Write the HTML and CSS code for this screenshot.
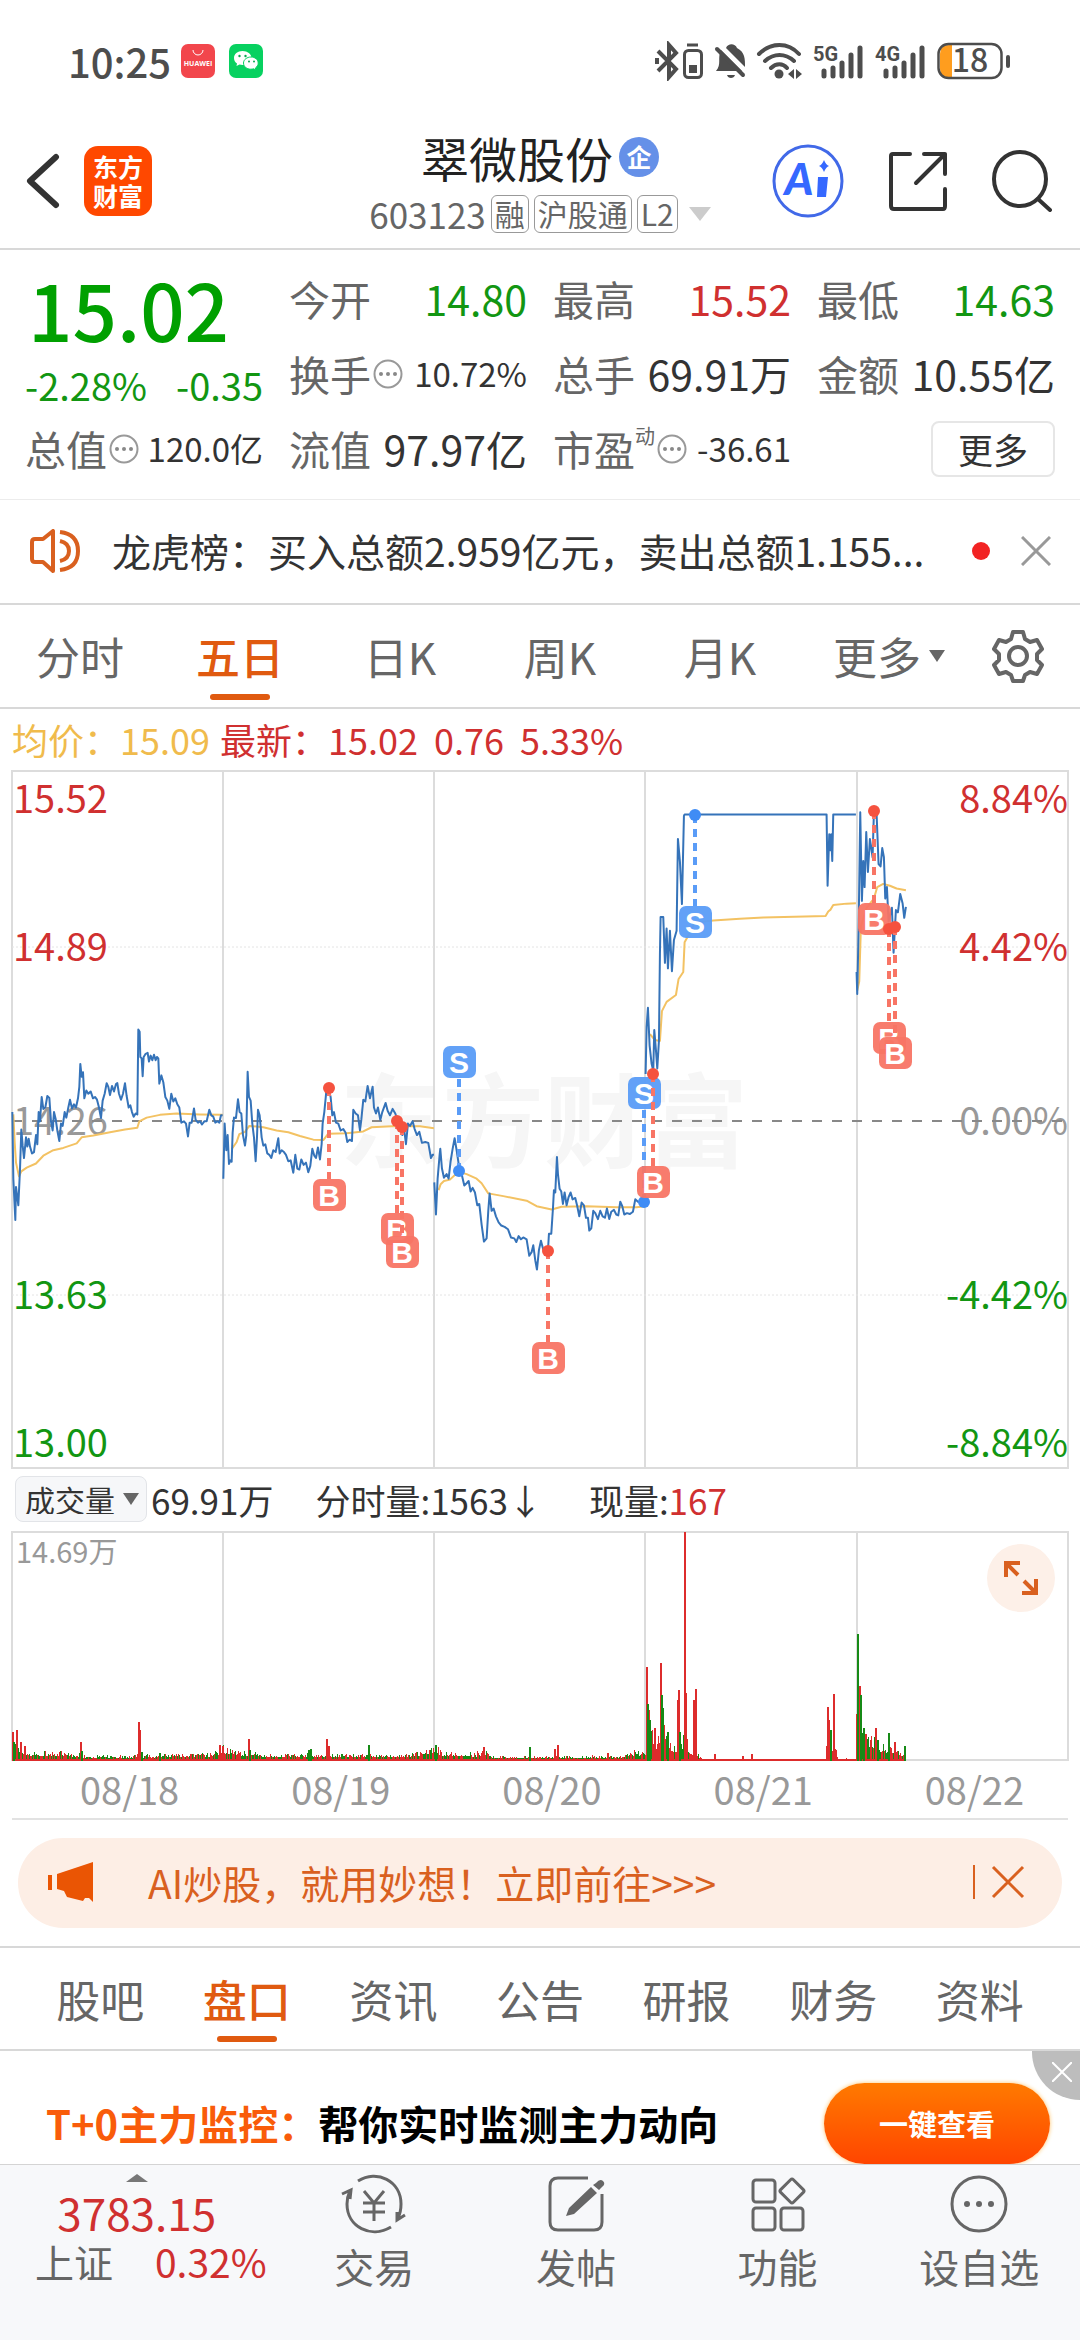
FILE: index.html
```html
<!DOCTYPE html>
<html lang="zh-CN">
<head>
    <meta charset="UTF-8">
    <meta name="viewport" content="width=device-width, initial-scale=1.0">
    <title>翠微股份 603123</title>
    <link rel="stylesheet" href="styles.css">
</head>
<body>
    <div class="status-bar">
        <span class="time">10:25</span>
        <svg class="app-icon" width="34" height="34" viewBox="0 0 34 34">
            <rect width="34" height="34" rx="7" fill="#f2464c"/>
            <path d="M12 6a5 5 0 0 0 10 0" fill="none" stroke="#fff" stroke-width="1"/>
            <text x="17" y="22" class="huawei">HUAWEI</text>
        </svg>
        <svg class="app-icon" width="34" height="34" viewBox="0 0 34 34">
            <rect width="34" height="34" rx="7" fill="#07d160"/>
            <path d="M13.500 7C8.500 7 5 10 5 14c0 2.500 1.200 4.200 3 5.500l-.5 2.500 3-1.500c1 .3 2 .4 3 .4 5 0 9-3 9-7s-4-6.900-9-6.900z" fill="#fff"/>
            <path d="M22 13c-4 0-7.500 2.600-7.500 6s3.200 6.200 7.200 6.200c1 0 2-.1 2.800-.4l2.500 1.200-.6-2c1.700-1.200 2.800-2.900 2.800-4.900 0-3.500-3.200-6.100-7.200-6.100z" fill="#fff" stroke="#07d160"/>
            <g fill="#07a850"><circle cx="10.500" cy="12" r="1.200"/><circle cx="16.500" cy="12" r="1.200"/><circle cx="20" cy="17.500" r="1"/><circle cx="25" cy="17.500" r="1"/></g>
        </svg>
        <svg class="status-icons" width="360" height="40" viewBox="0 0 360 40" fill="none" stroke="#4d4d4d" stroke-width="3">
            <path d="M4 10l18 18-7 8V4l7 8L4 30M3 17v6" stroke-width="4"/>
            <rect x="30.500" y="9.500" width="17" height="27" rx="4"/>
            <path d="M33 4h11"/>
            <rect x="35" y="24" width="8" height="8" fill="#4d4d4d" stroke="none"/>
            <path d="M62 30h26L67 9c-4 8 1 14-5 21zM72 7c2-5 9-5 11 0 8 4 8 11 8 19zM73 34h8c-1 4-7 4-8 0z" fill="#4d4d4d" stroke="none"/>
            <path d="M63 8l26 26" stroke-width="4" stroke-linecap="round"/>
            <g stroke-width="4" stroke-linecap="round">
                <path d="M105 13c12-12 29-12 40 0M111 20c9-8 20-8 29 0M117 27c5-5 12-5 16 0"/>
            </g>
            <circle cx="125" cy="33" r="4.500" fill="#4d4d4d" stroke="none"/>
            <path d="M140 28v10l-6-5zM142 28v10l6-5z" fill="#4d4d4d" stroke="none"/>
            <g stroke-width="5" stroke-linecap="round">
                <path d="M170 30v5M179 27v8M188 22v13M197 14v21M206 7v28"/>
                <path d="M232 30v5M241 27v8M250 22v13M259 14v21M268 7v28"/>
            </g>
            <text x="159" y="20" class="net">5G</text>
            <text x="221" y="20" class="net">4G</text>
            <path d="M298 4h-3q-9 0-9 9v15q0 9 9 9h3z" fill="#ff9d1e" stroke="none"/>
            <rect x="284.500" y="3" width="63" height="34" rx="10" stroke-width="2.500"/>
            <path d="M354 16v9" stroke-width="4" stroke-linecap="round"/>
            <text x="316" y="31" class="battery">18</text>
        </svg>
    </div>

    <header class="header">
        <button class="icon-btn" aria-label="返回">
            <svg width="34" height="56" viewBox="0 0 34 56" fill="none" stroke="#333" stroke-width="6" stroke-linecap="round" stroke-linejoin="round"><path d="M30 4L4 28l26 24"/></svg>
        </button>
        <a class="logo" href="#">东方<br>财富</a>
        <div class="stock">
            <h1 class="stock-name">翠微股份<span class="badge">企</span></h1>
            <div class="stock-code">
                603123<span class="tag">融</span><span class="tag">沪股通</span><span class="tag">L2</span>
                <svg width="22" height="14" viewBox="0 0 22 14"><path d="M0 0h22L11 14z" fill="#ccc"/></svg>
            </div>
        </div>
        <button class="icon-btn" aria-label="AI">
            <svg width="72" height="74" viewBox="0 0 72 74"><ellipse cx="36" cy="37" rx="34" ry="35" fill="none" stroke="#4169e8" stroke-width="3"/><text x="27" y="51" class="ai">A</text><path d="M46 33h10l-2 20h-9zM52 16q2 5 5 6-3 1-5 6-2-5-5-6 3-1 5-6z" fill="#3568ff"/></svg>
        </button>
        <button class="icon-btn" aria-label="分享">
            <svg width="60" height="60" viewBox="0 0 60 60" fill="none" stroke="#333" stroke-width="4" stroke-linecap="round" stroke-linejoin="round"><path d="M22 3H5q-2 0-2 2v50q0 3 3 3h49q2 0 2-3V38M36 3h21v20M57 3L28 32"/></svg>
        </button>
        <button class="icon-btn" aria-label="搜索">
            <svg width="60" height="62" viewBox="0 0 60 62" fill="none" stroke="#333" stroke-width="4" stroke-linecap="round"><ellipse cx="28" cy="29" rx="26" ry="27"/><path d="M46 49l12 11"/></svg>
        </button>
    </header>

    <section class="quote">
        <div class="price-box">
            <div class="price">15.02</div>
            <div class="change"><span>-2.28%</span><span>-0.35</span></div>
        </div>
        <div class="cell"><span class="label">今开</span><span class="value down">14.80</span></div>
        <div class="cell"><span class="label">最高</span><span class="value up">15.52</span></div>
        <div class="cell"><span class="label">最低</span><span class="value down">14.63</span></div>
        <div class="cell"><span class="label">换手</span><svg class="more-dot"><use href="#dots"/></svg><span class="value small">10.72%</span></div>
        <div class="cell"><span class="label">总手</span><span class="value">69.91万</span></div>
        <div class="cell"><span class="label">金额</span><span class="value">10.55亿</span></div>
        <div class="cell"><span class="label">总值</span><svg class="more-dot"><use href="#dots"/></svg><span class="value small">120.0亿</span></div>
        <div class="cell"><span class="label">流值</span><span class="value">97.97亿</span></div>
        <div class="cell"><span class="label">市盈<sup>动</sup></span><svg class="more-dot"><use href="#dots"/></svg><span class="value small">-36.61</span></div>
        <div class="cell"><button class="more-btn">更多</button></div>
    </section>

    <svg class="defs" width="0" height="0">
        <symbol id="dots" viewBox="0 0 30 30"><circle cx="15" cy="15" r="13.500" fill="none" stroke="#999" stroke-width="2"/><g fill="#888"><circle cx="8" cy="15" r="2"/><circle cx="15" cy="15" r="2"/><circle cx="22" cy="15" r="2"/></g></symbol>
        <symbol id="caret" viewBox="0 0 16 12"><path d="M0 0h16L8 12z" fill="#666"/></symbol>
    </svg>

    <section class="news">
        <svg width="50" height="44" viewBox="0 0 50 44" fill="none" stroke="#d9601f" stroke-width="4" stroke-linejoin="round"><path d="M2 13q0-3 3-3h8L23 2v40L13 33H5q-3 0-3-3zM30 12q9 2 9 10t-9 10M30 3q18 2 18 19T30 41"/></svg>
        <a class="news-text" href="#">龙虎榜：买入总额2.959亿元，卖出总额1.155...</a>
        <span class="dot"></span>
        <button class="icon-btn" aria-label="关闭">
            <svg width="30" height="30" viewBox="0 0 30 30" stroke="#999" stroke-width="3"><path d="M1 1l28 28M29 1L1 29"/></svg>
        </button>
    </section>

    <nav class="tabs">
        <button>分时</button>
        <button class="active">五日</button>
        <button>日K</button>
        <button>周K</button>
        <button>月K</button>
        <button class="tab-more">更多<svg width="16" height="12"><use href="#caret"/></svg></button>
        <button class="tab-gear" aria-label="设置">
            <svg width="52" height="54" viewBox="0 0 52 54" fill="none" stroke="#666" stroke-width="4" stroke-linejoin="round"><path d="M21 3h10l2 7 5 3 7-2 5 9-5 5v6l5 5-5 9-7-2-5 3-2 6H21l-2-6-5-3-7 2-5-9 5-5v-6l-5-5 5-9 7 2 5-3z"/><circle cx="26" cy="27" r="9"/></svg>
        </button>
    </nav>

    <div class="legend">
        <span class="avg">均价：15.09</span>
        <span class="up">最新：15.02&nbsp; 0.76&nbsp; 5.33%</span>
    </div>

    <svg class="price-chart" viewBox="0 0 1080 699">
        <text x="544" y="390" class="watermark">东方财富</text>
        <g class="grid">
            <path d="M12 1h1056v697H12zM223 1v697M434 1v697M645 1v697M857 1v697"/>
            <path d="M12 177h1056M12 525h1056" class="dotted"/>
        </g>
        <g class="axis">
            <text x="13" y="43" class="up">15.52</text>
            <text x="13" y="191" class="up">14.89</text>
            <text x="13" y="365">14.26</text>
            <text x="13" y="539" class="down">13.63</text>
            <text x="13" y="687" class="down">13.00</text>
        </g>
        <g class="axis right">
            <text x="1068" y="43" class="up">8.84%</text>
            <text x="1068" y="191" class="up">4.42%</text>
            <text x="1068" y="365">0.00%</text>
            <text x="1068" y="539" class="down">-4.42%</text>
            <text x="1068" y="687" class="down">-8.84%</text>
        </g>
        <path d="M12 351h1050" class="zero"/>
        <g id="lines"></g>
        <g id="markers"></g>
    </svg>

    <div class="volume-info">
        <label class="indicator">
            <select aria-label="指标"><option>成交量</option></select>
            <svg width="16" height="12"><use href="#caret"/></svg>
        </label>
        <span class="total">69.91万</span>
        <span class="minute">分时量:1563↓</span>
        <span>现量:<b class="up">167</b></span>
    </div>

    <div class="volume">
        <svg class="volume-chart" viewBox="0 0 1080 230">
            <path d="M12 1h1056v228H12zM223 1v228M434 1v228M645 1v228M857 1v228" class="frame"/>
            <text x="16" y="32" class="volume-max">14.69万</text>
            <g id="bars"></g>
        </svg>
        <button class="expand" aria-label="全屏">
            <svg width="34" height="34" viewBox="0 0 34 34" fill="none" stroke="#d9601f" stroke-width="4"><path d="M2 16V2h14M2 2l12 12M32 18v14H18M32 32L20 20"/></svg>
        </button>
    </div>
    <div class="dates"><span>08/18</span><span>08/19</span><span>08/20</span><span>08/21</span><span>08/22</span></div>

    <div class="promo">
        <svg width="46" height="40" viewBox="0 0 46 40" fill="#ea5504"><path d="M0 13h4v15H0zM9 12L45 0v40l-4-4h-4l-2 3-16-4-3-6-7-2z"/></svg>
        <a href="#">AI炒股，就用妙想！立即前往&gt;&gt;&gt;</a>
        <button class="icon-btn" aria-label="关闭">
            <svg width="34" height="34" viewBox="0 0 34 34" stroke="#d9601f" stroke-width="3"><path d="M2 2l30 30M32 2L2 32"/></svg>
        </button>
    </div>

    <nav class="tabs info-tabs">
        <button>股吧</button>
        <button class="active">盘口</button>
        <button>资讯</button>
        <button>公告</button>
        <button>研报</button>
        <button>财务</button>
        <button>资料</button>
    </nav>

    <section class="ad">
        <p><span class="ad-title">T+0主力监控：</span>帮你实时监测主力动向</p>
        <button class="ad-btn">一键查看</button>
        <button class="ad-close" aria-label="关闭广告">
            <svg width="20" height="20" viewBox="0 0 20 20" stroke="#fff" stroke-width="2"><path d="M0 0l20 20M20 0L0 20"/></svg>
        </button>
    </section>

    <footer class="bottom-bar">
        <a class="index" href="#">
            <svg width="22" height="8" viewBox="0 0 22 8"><path d="M11 0l11 8H0z" fill="#777"/></svg>
            <span class="index-value">3783.15</span>
            <span class="index-row"><span>上证</span><span class="up">0.32%</span></span>
        </a>
        <a href="#">
            <svg width="66" height="60" viewBox="0 0 66 60" fill="none" stroke="#666" stroke-width="3"><path d="M17 7C36-5 60 7 60 30q0 8-3 14M50 53C30 65 6 53 6 30q0-7 3-13M1 20l9-4-1 9M64 41l-8 5v-8"/><path d="M23 17l10 12 10-12M33 29v18M22 29h22M22 38h22"/></svg>
            交易
        </a>
        <a href="#">
            <svg width="60" height="60" viewBox="0 0 60 60" fill="none" stroke="#666" stroke-width="3"><path d="M42 4H12q-8 0-8 8v36q0 8 8 8h36q8 0 8-8V20"/><path d="M50 9q4-5 7-2t-1 6l-3 3-6-5zM45 13l6 6-23 21-8 2 3-8z" fill="#666" stroke="none"/></svg>
            发帖
        </a>
        <a href="#">
            <svg width="60" height="60" viewBox="0 0 60 60" fill="none" stroke="#666" stroke-width="3"><rect x="5" y="6" width="22" height="22" rx="3"/><rect x="5" y="34" width="22" height="22" rx="3"/><rect x="33" y="34" width="22" height="22" rx="3"/><rect x="35" y="8" width="18" height="18" rx="2" transform="rotate(45 44 17)"/></svg>
            功能
        </a>
        <a href="#">
            <svg width="60" height="60" viewBox="0 0 60 60"><circle cx="30" cy="30" r="27" fill="none" stroke="#666" stroke-width="3"/><g fill="#666"><circle cx="18" cy="30" r="3"/><circle cx="30" cy="30" r="3"/><circle cx="42" cy="30" r="3"/></g></svg>
            设自选
        </a>
    </footer>

    <script src="script.js"></script>
</body>
</html>
```

FILE: styles.css
```css
* {
    box-sizing: border-box;
}
body {
    margin: 0;
    background: #fff;
    color: #333;
    font-family: "Noto Sans CJK SC", sans-serif;
    font-size: 35px;
    line-height: 1;
}
button, select {
    font: inherit;
    color: inherit;
    background: none;
    border: none;
    padding: 0;
    cursor: pointer;
}
a {
    color: inherit;
    text-decoration: none;
}
svg {
    display: block;
    flex: none;
}
.defs {
    position: absolute;
}
.up {
    color: #d03030;
    fill: #d03030;
}
.down {
    color: #129612;
    fill: #129612;
}
.icon-btn {
    flex: none;
}

/* status bar */
.status-bar {
    display: flex;
    align-items: center;
    gap: 14px;
    height: 100px;
    padding: 22px 66px 0 68px;
    color: #4d4d4d;
}
.time {
    font-size: 40px;
    font-weight: 500;
    margin-right: -4px;
}
.status-icons {
    margin-left: auto;
}
.huawei {
    font: bold 7px "Open Sans", sans-serif;
    fill: #fff;
    text-anchor: middle;
}
.net {
    font: bold 20px Roboto, sans-serif;
    fill: #4d4d4d;
    stroke: none;
}
.battery {
    font: 500 32px "Noto Sans CJK SC", sans-serif;
    fill: #4d4d4d;
    stroke: none;
    text-anchor: middle;
}

/* header */
.header {
    display: flex;
    align-items: center;
    height: 150px;
    padding: 14px 28px 0 26px;
    border-bottom: 2px solid #d8d8d8;
}
.logo {
    width: 68px;
    height: 70px;
    margin-left: 24px;
    padding-top: 6px;
    border-radius: 14px;
    background: #ff4800;
    color: #fff;
    font-size: 25px;
    font-weight: bold;
    line-height: 29px;
    text-align: center;
}
.stock {
    flex: 1;
    padding-left: 156px;
}
.stock-name {
    display: flex;
    align-items: center;
    justify-content: center;
    gap: 6px;
    margin: 0;
    font-size: 48px;
    font-weight: normal;
    line-height: 54px;
    color: #222;
}
.badge {
    width: 40px;
    height: 40px;
    border-radius: 50%;
    background: #6590e8;
    color: #fff;
    font-size: 25px;
    font-weight: bold;
    line-height: 38px;
    text-align: center;
}
.stock-code {
    display: flex;
    align-items: center;
    justify-content: center;
    gap: 5px;
    margin-top: 11px;
    color: #666;
    font-size: 35px;
}
.tag {
    height: 38px;
    padding: 0 3px;
    border: 1px solid #999;
    border-radius: 6px;
    font-size: 30px;
    line-height: 34px;
}
.stock-code svg {
    margin-left: 6px;
}
.header .stock ~ .icon-btn {
    margin-left: 44px;
}
.header .stock + .icon-btn {
    margin-left: 0;
}
.ai {
    font: italic 900 44px Lato, sans-serif;
    fill: #3568ff;
    text-anchor: middle;
}

/* quote */
.quote {
    display: grid;
    grid-template-columns: repeat(4, 1fr);
    grid-template-rows: repeat(3, 75px);
    column-gap: 26px;
    padding: 11px 25px 13px 25px;
    border-bottom: 1px solid #ececec;
}
.price-box {
    grid-row: span 2;
    color: #00a000;
}
.price {
    margin: 5px 0 0 3px;
    font-size: 78px;
    font-weight: 500;
    line-height: 84px;
}
.change {
    display: flex;
    justify-content: space-between;
    margin-top: 16px;
    font-size: 38px;
    color: #129612;
}
.cell {
    display: flex;
    align-items: center;
    white-space: nowrap;
}
.label {
    color: #666;
    font-size: 41px;
}
.label sup {
    font-size: 20px;
    line-height: 0;
    vertical-align: 22px;
}
.value {
    margin-left: auto;
    font-size: 41px;
}
.small {
    font-size: 33px;
}
.more-dot {
    width: 30px;
    height: 30px;
    margin-left: 2px;
}
.more-btn {
    width: 124px;
    height: 56px;
    margin-left: auto;
    border: 2px solid #e6e6e6;
    border-radius: 8px;
    font-size: 35px;
    line-height: 48px;
}

/* news */
.news {
    display: flex;
    align-items: center;
    height: 105px;
    padding: 0 29px 2px 30px;
    border-bottom: 2px solid #d8d8d8;
    font-size: 39px;
}
.news-text {
    flex: 1;
    margin-left: 32px;
    white-space: nowrap;
}
.dot {
    width: 18px;
    height: 18px;
    margin-right: 31px;
    border-radius: 50%;
    background: #f22323;
}

/* tabs */
.tabs {
    display: flex;
    height: 104px;
    padding-right: 22px;
    border-bottom: 2px solid #d8d8d8;
    color: #666;
    font-size: 44px;
}
.tabs button {
    position: relative;
    flex: 160;
    display: flex;
    align-items: center;
    justify-content: center;
}
.tabs .tab-more {
    flex: 178;
    gap: 8px;
}
.tabs .tab-gear {
    flex: 80;
}
.tabs .active {
    color: #e05a10;
    font-weight: 500;
}
.tabs .active::after {
    content: "";
    position: absolute;
    bottom: 7px;
    left: 50%;
    width: 60px;
    height: 6px;
    margin-left: -30px;
    border-radius: 3px;
    background: #e05a10;
}

/* charts */
.legend {
    display: flex;
    align-items: center;
    gap: 10px;
    height: 61px;
    padding: 0 0 2px 12px;
    font-size: 36px;
}
.avg {
    color: #f0bb4c;
}
.price-chart, .volume-chart {
    width: 100%;
    height: auto;
}
.watermark {
    font-size: 102px;
    font-weight: bold;
    fill: #f6f6f6;
    text-anchor: middle;
}
.grid path, .frame {
    fill: none;
    stroke: #dcdcdc;
    stroke-width: 2;
}
.grid .dotted {
    stroke: #e4e4e4;
    stroke-width: 1;
    stroke-dasharray: 2 2;
}
.zero {
    stroke: #888;
    stroke-width: 2;
    stroke-dasharray: 10 10;
}
.axis text {
    font-size: 38px;
}
.axis text:not([class]) {
    fill: #999;
}
.right text {
    text-anchor: end;
}
#lines polyline {
    fill: none;
    stroke: #3573b9;
    stroke-width: 2;
    stroke-linejoin: round;
    vector-effect: non-scaling-stroke;
}
#lines .avg-line {
    stroke: #f3c263;
}
.marker text {
    font: bold 30px "Liberation Sans", sans-serif;
    fill: #fff;
    text-anchor: middle;
}
.marker line {
    stroke-width: 4;
    stroke-dasharray: 8 6;
}
.buy {
    fill: #f87565;
    stroke: #f87565;
}
.sell {
    fill: #5a9cf7;
    stroke: #5a9cf7;
}
.marker text, .marker rect {
    stroke: none;
}
.marker rect {
    fill-opacity: 0.95;
}
.buy circle {
    fill: #f5523f;
    stroke: none;
}
.sell circle {
    fill: #3f8cf5;
    stroke: none;
}
.volume-info {
    display: flex;
    align-items: center;
    height: 62px;
    padding: 0 0 2px 15px;
}
.volume-info b {
    font-weight: normal;
}
.indicator {
    display: flex;
    align-items: center;
    width: 132px;
    height: 46px;
    margin-right: 4px;
    padding-left: 9px;
    border: 1px solid #e2e4e8;
    border-radius: 8px;
    background: #f6f7f9;
    font-size: 30px;
}
.indicator select {
    appearance: none;
    width: 98px;
    height: 40px;
}
.total {
    margin-right: 42px;
}
.minute {
    margin-right: 46px;
}
.volume {
    position: relative;
}
.volume-max {
    font-size: 29px;
    fill: #999;
}
.expand {
    position: absolute;
    top: 13px;
    right: 25px;
    display: flex;
    align-items: center;
    justify-content: center;
    width: 68px;
    height: 68px;
    border-radius: 50%;
    background: #fdf0e8;
}
.dates {
    display: grid;
    grid-template-columns: repeat(5, 1fr);
    margin: 0 12px;
    padding: 9px 0 10px;
    border-bottom: 2px solid #e2e2e2;
    color: #999;
    font-size: 38px;
    text-align: center;
    text-indent: 24px;
}

/* promo */
.promo {
    display: flex;
    align-items: center;
    height: 90px;
    margin: 18px 18px;
    padding: 0 37px 2px 30px;
    border-radius: 45px;
    background: #fdeee5;
    color: #d9601f;
    font-size: 39px;
}
.promo a {
    flex: 1;
    margin-left: 54px;
}
.promo .icon-btn {
    padding-left: 16px;
    border-left: 2px solid #d9601f;
}
.info-tabs {
    height: 105px;
    padding: 0 27px;
    border-top: 2px solid #d8d8d8;
}

/* ad */
.ad {
    position: relative;
    display: flex;
    align-items: flex-end;
    justify-content: space-between;
    height: 113px;
    padding: 0 30px 0 46px;
}
.ad p {
    margin: 0 0 21px;
    color: #000;
    font-size: 40px;
    font-weight: bold;
}
.ad-title {
    color: #f95c0a;
}
.ad-btn {
    width: 226px;
    height: 81px;
    border-radius: 41px;
    background: linear-gradient(#ff7a00, #ff4500);
    box-shadow: 0 0 4px #ffc46a;
    color: #fff;
    font-size: 29px;
    font-weight: bold;
}
.ad-close {
    position: absolute;
    top: 0;
    right: 0;
    width: 48px;
    height: 49px;
    padding: 0 0 8px 20px;
    border-bottom-left-radius: 48px;
    background: #bdbdbd;
}

/* bottom bar */
.bottom-bar {
    position: relative;
    display: flex;
    height: 176px;
    border-top: 1px solid #d4d4d4;
    background: #f7f8fa;
    color: #666;
    font-size: 40px;
}
.bottom-bar a {
    flex: 202;
    display: flex;
    flex-direction: column;
    align-items: center;
    gap: 12px;
    padding-top: 9px;
}
.bottom-bar .index {
    flex: 274;
    gap: 8px;
}
.index-value {
    color: #d03030;
    font-size: 44px;
}
.index-row {
    display: flex;
    gap: 42px;
    padding-left: 28px;
    font-size: 39px;
}
```

FILE: script.js
```js
const NS = "http://www.w3.org/2000/svg";

function add(parent, tag, attrs, text) {
    const el = document.createElementNS(NS, tag);
    for (const key in attrs) el.setAttribute(key, attrs[key]);
    if (text) el.textContent = text;
    parent.appendChild(el);
    return el;
}

// one entry per trading day, x in thirds of a pixel
const averages = [
    "40,750 44,810 48,855 57,885 64,874 80,866 108,857 130,840 160,828 190,823 230,813 245,800 280,796 330,789 375,783 412,779 418,765 440,757 480,751 530,748 600,750 668,751",
    "695,826 710,810 718,793 735,788 748,775 790,778 830,785 865,789 900,797 940,805 970,806 985,792 1040,791 1090,787 1115,778 1190,775 1260,776 1302,780",
    "1316,915 1322,902 1332,895 1350,892 1375,875 1400,880 1430,890 1445,900 1465,922 1510,928 1580,938 1610,950 1655,957 1685,951 1760,950 1850,952 1910,952 1935,950",
    "1950,575 1965,588 1980,590 1986,525 2000,505 2028,490 2036,455 2050,440 2054,375 2064,362 2085,332 2140,328 2220,324 2290,321 2477,318 2485,308 2492,304 2500,294 2540,291 2568,290",
    "2572,480 2578,460 2583,340 2600,300 2622,280 2632,255 2650,248 2670,252 2690,258 2718,262"
];
const prices = [
    "37,745 40,890 46,980 48,908 55,948 60,870 64,783 68,818 72,845 78,800 82,820 86,803 90,820 96,835 102,832 108,795 112,815 116,745 120,765 125,712 130,738 136,735 142,710 148,714 153,765 158,785 162,745 167,760 172,785 178,808 183,770 188,775 194,745 199,757 205,735 210,718 216,737 222,728 228,735 234,715 238,690 241,640 245,668 249,658 253,715 259,698 265,705 272,700 279,715 285,712 291,718 297,735 303,758 308,720 314,705 320,682 325,690 330,708 336,688 342,700 348,684 352,682 357,705 363,718 369,705 375,682 380,710 386,735 391,730 396,745 401,755 407,748 412,750 415,565 419,570 421,625 425,628 428,667 431,625 437,618 443,616 447,635 452,622 457,632 462,620 467,632 471,625 475,628 478,683 484,665 490,680 496,712 502,720 508,738 514,705 520,722 526,715 532,728 538,735 544,768 552,765 558,770 564,798 569,768 575,768 582,737 587,762 594,768 600,765 606,772 613,765 620,765 628,740 634,752 640,755 646,768 652,765 658,768 663,752 668,752",
    "670,890 674,770 679,828 683,795 687,858 691,850 695,853 698,790 702,757 708,758 714,717 719,745 724,748 729,795 735,818 739,795 743,657 747,712 752,720 757,770 762,800 767,852 771,800 774,740 779,752 785,800 790,818 796,815 802,835 808,838 814,845 820,828 827,832 835,802 839,835 845,828 852,832 858,838 865,852 872,850 880,877 886,838 892,868 898,870 904,848 911,860 918,855 925,876 931,862 937,825 943,840 948,845 954,822 960,848 965,815 968,770 973,745 979,700 985,692 992,712 997,752 1002,745 1008,768 1015,770 1022,785 1030,782 1037,790 1042,810 1049,805 1056,808 1060,740 1067,748 1074,752 1080,785 1084,762 1090,718 1096,722 1103,688 1110,715 1118,690 1122,735 1128,748 1134,735 1141,762 1147,745 1157,725 1163,742 1170,752 1178,738 1186,748 1192,760 1200,770 1207,795 1213,785 1218,815 1224,770 1230,775 1238,765 1244,782 1251,795 1258,788 1266,812 1276,810 1285,812 1293,845 1298,838 1302,838",
    "1303,898 1308,968 1313,890 1319,838 1321,825 1326,868 1332,888 1340,880 1346,890 1352,852 1358,825 1364,802 1370,828 1377,862 1385,880 1393,905 1400,900 1406,895 1412,918 1418,910 1425,920 1432,948 1438,945 1445,990 1452,1027 1460,1020 1465,960 1469,922 1475,960 1481,955 1488,972 1496,985 1504,992 1514,995 1524,1000 1533,1018 1543,1020 1549,1028 1556,1015 1563,1022 1570,1018 1580,1022 1588,1058 1595,1050 1600,1035 1606,1068 1611,1088 1617,1045 1623,1025 1630,1045 1638,1050 1644,1047 1647,1010 1654,1010 1659,955 1662,915 1666,920 1671,843 1674,880 1679,912 1684,918 1689,945 1694,920 1700,948 1706,930 1712,920 1718,935 1726,932 1732,950 1738,972 1745,942 1752,948 1758,975 1764,975 1768,1003 1774,998 1780,960 1786,965 1794,978 1801,960 1808,972 1815,975 1821,955 1828,978 1834,962 1842,958 1849,968 1855,970 1861,940 1867,950 1873,968 1881,965 1890,967 1899,962 1906,935 1914,940 1925,940 1935,940",
    "1937,662 1940,560 1944,518 1949,600 1955,640 1960,655 1963,566 1968,610 1972,650 1977,590 1980,400 1982,320 1990,320 1995,420 2000,345 2004,432 2010,350 2016,438 2022,370 2030,350 2034,150 2040,200 2046,292 2052,100 2054,97 2480,97 2483,252 2488,140 2492,175 2494,140 2497,198 2500,97 2568,97",
    "2570,440 2572,488 2576,350 2581,92 2586,285 2590,198 2594,255 2599,135 2604,222 2610,150 2618,190 2622,92 2630,95 2636,205 2642,210 2647,170 2652,190 2656,280 2661,255 2666,330 2676,300 2681,398 2688,305 2694,310 2701,270 2708,290 2713,322 2718,298"
];

const lines = document.getElementById("lines");
lines.setAttribute("transform", "scale(0.3333 0.4592)");
averages.forEach(points => add(lines, "polyline", { points, class: "avg-line" }));
prices.forEach(points => add(lines, "polyline", { points }));

// type, x, y of the trade, y of the label
const trades = [
    ["B", 329, 318, 425], ["B", 397, 351, 459], ["B", 402, 357, 482],
    ["S", 459, 401, 292], ["B", 548, 481, 588], ["S", 644, 432, 323],
    ["B", 653, 304, 412], ["S", 695, 45, 152], ["B", 874, 41, 149],
    ["B", 889, 159, 268], ["B", 895, 157, 283]
];
const markers = document.getElementById("markers");
trades.forEach(([type, x, y, labelY]) => {
    const g = add(markers, "g", { class: "marker " + (type === "B" ? "buy" : "sell") });
    add(g, "line", { x1: x, y1: y, x2: x, y2: labelY + (labelY > y ? -16 : 16) });
    add(g, "circle", { cx: x, cy: y, r: 6 });
    add(g, "rect", { x: x - 16, y: labelY - 16, width: 33, height: 32, rx: 7 });
    add(g, "text", { x: x, y: labelY + 11 }, type);
});

// volume: quiet minutes between the spikes below
const BASE = 229;
const bars = document.getElementById("bars");
let seed = 7;
function random() {
    seed = (seed * 16807) % 2147483647;
    return seed / 2147483647;
}
function bar(x, height, color, width) {
    add(bars, "rect", { x, y: BASE - height, width, height: height + 1, fill: color });
}
const RED = "#dd2c2c";
const GREEN = "#168a16";
const envelope = [
    [12, 26], [20, 16], [30, 9], [60, 9], [90, 5], [130, 5], [150, 6], [210, 8],
    [222, 15], [235, 12], [260, 7], [300, 7], [330, 6], [365, 7], [410, 6],
    [430, 14], [445, 10], [475, 7], [486, 14], [492, 4], [560, 4], [620, 5],
    [645, 12], [646, 50], [655, 25], [662, 36], [675, 16], [680, 28], [690, 14],
    [697, 9], [702, 1], [825, 1], [827, 34], [834, 16], [838, 2], [855, 1],
    [857, 60], [865, 30], [880, 20], [895, 16], [905, 4]
];
for (let x = 12; x < 906; x++) {
    let i = 1;
    while (i < envelope.length - 1 && envelope[i][0] < x) i++;
    const [x0, h0] = envelope[i - 1];
    const [x1, h1] = envelope[i];
    const limit = h0 + (h1 - h0) * (x - x0) / (x1 - x0);
    const height = Math.max(1, Math.round(limit * (0.4 + random() * random() * 0.8)));
    const green = (x < 700 || x > 856) && random() > 0.5;
    bar(x, height, green ? GREEN : RED, 1);
    bar(x, 1, RED, 1);
}
const redSpikes = [
    [12, 28], [16, 30], [20, 18], [24, 14], [80, 18], [138, 38], [139, 30],
    [219, 15], [222, 14], [248, 21], [326, 21], [328, 14], [483, 13], [554, 11],
    [557, 15], [607, 7], [646, 93], [648, 50], [654, 32], [660, 97], [663, 35],
    [677, 60], [678, 70], [684, 228], [685, 67], [693, 60], [695, 71],
    [714, 6], [742, 4], [751, 6], [827, 53], [828, 40], [833, 66], [856, 46],
    [859, 74], [865, 26], [875, 32], [894, 18]
];
const greenSpikes = [
    [13, 18], [81, 9], [141, 8], [159, 7], [249, 10], [308, 10], [310, 11],
    [368, 15], [435, 15], [529, 13], [647, 56], [649, 40], [661, 65], [662, 52],
    [667, 28], [679, 28], [830, 30], [857, 126], [860, 65], [863, 32],
    [877, 20], [888, 27], [904, 14]
];
redSpikes.forEach(([x, h]) => bar(x, h, RED, 2));
greenSpikes.forEach(([x, h]) => bar(x, h, GREEN, 2));
```
